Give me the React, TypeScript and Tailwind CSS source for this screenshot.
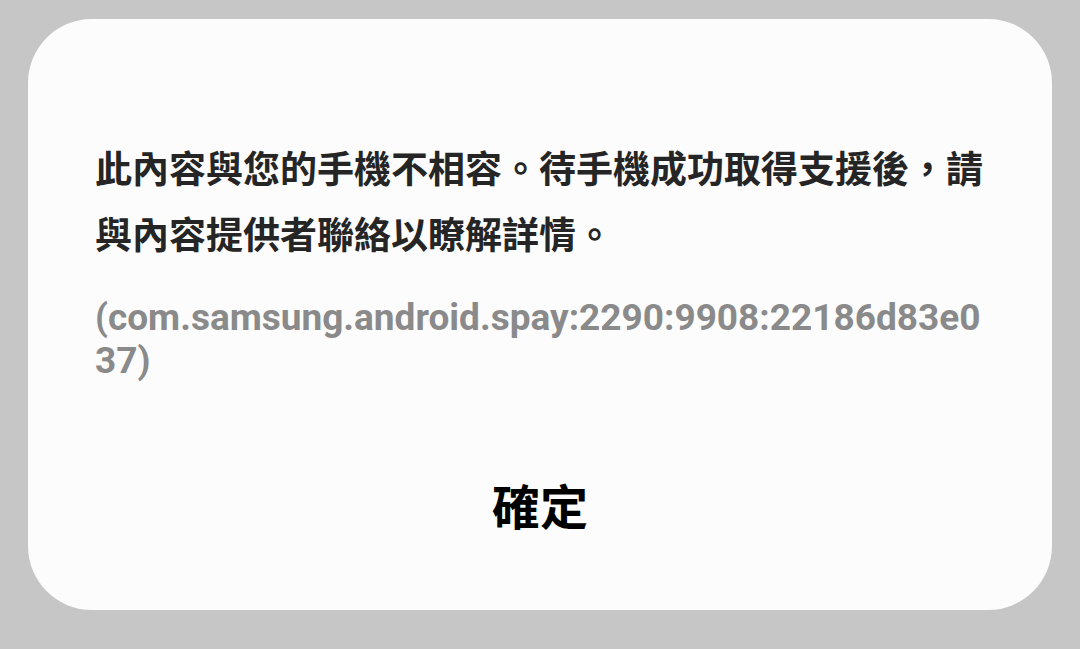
const App = () => {
  return (
    <div className="w-screen h-[649px] bg-[#c6c6c6] pt-[19px] px-[28px]">
      <div className="w-[1024px] h-[591px] bg-[#fcfcfc] rounded-[64px] flex flex-col px-[67px] pt-[115px]">
        <p
          className="text-[37px] leading-[66px] font-bold text-[#252525]"
          style={{ fontFamily: '"Noto Sans CJK TC", "Noto Sans", sans-serif' }}
        >
          此內容與您的手機不相容。待手機成功取得支援後，請與內容提供者聯絡以瞭解詳情。
        </p>
        <p
          className="mt-[30px] text-[37px] leading-[43px] font-bold text-[#8a8a8b] break-all"
          style={{ fontFamily: 'Roboto, "Noto Sans", sans-serif' }}
        >
          (com.samsung.android.spay:2290:9908:22186d83e037)
        </p>
        <div className="flex-1 flex items-center justify-center pt-[16px]">
          <button
            className="text-[48px] font-bold text-black"
            style={{ fontFamily: '"Noto Sans CJK TC", sans-serif' }}
          >
            確定
          </button>
        </div>
      </div>
    </div>
  )
}

export default App
